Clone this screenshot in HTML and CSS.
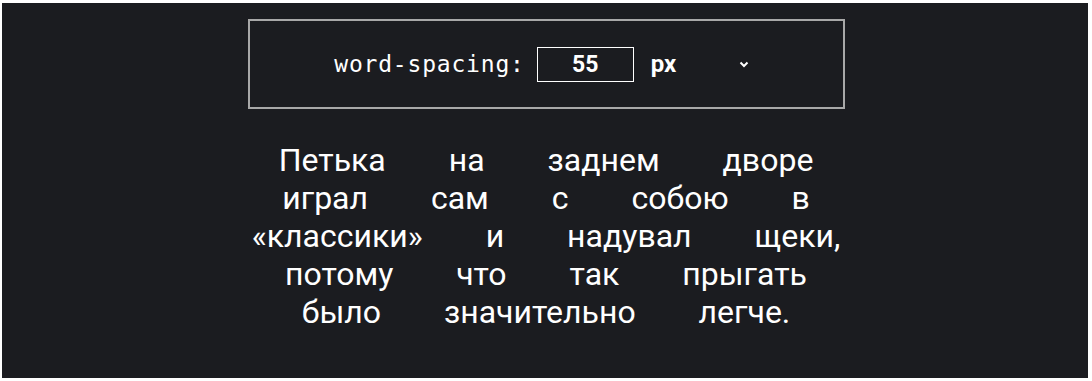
FILE: index.html
```html
<!DOCTYPE html>
<html lang="ru">
  <head>
    <meta charset="UTF-8">
    <title>word-spacing</title>
    <link rel="stylesheet" href="styles.css">
  </head>
  <body>
    <div class="stage">
      <div class="controls">
        <label for="value" class="prop">word-spacing:</label>
        <div class="value" id="value">55</div>
        <div class="unit">
          <span>px</span>
          <svg class="chevron" width="10" height="7" viewBox="0 0 10 7">
            <path d="M1.5 1.5 L5 5 L8.5 1.5" fill="none" stroke="#fff" stroke-width="2"/>
          </svg>
        </div>
      </div>
      <p class="sample">Петька на заднем дворе играл сам с собою в «классики» и надувал щеки, потому что так прыгать было значительно легче.</p>
    </div>
  </body>
</html>
```

FILE: styles.css
```css
html {
    background: #fff;
}
body {
    margin: 0;
    padding: 3px 4px 3px 2px;
}
.stage {
    background-color: #1b1c20;
    height: 375px;
    display: flex;
    flex-direction: column;
    align-items: center;
    padding: 16px 0 0 2px;
    box-sizing: border-box;
    color: #fff;
}
.controls {
    width: 597px;
    height: 90px;
    box-sizing: border-box;
    border: 2px solid #a8a8a8;
    display: flex;
    align-items: center;
    justify-content: center;
    padding-right: 4px;
}
.prop {
    font-family: "DejaVu Sans Mono", monospace;
    font-size: 23px;
    letter-spacing: 0.8px;
    margin-right: 12px;
}
.value {
    width: 97px;
    height: 35px;
    box-sizing: border-box;
    border: 1px solid #fff;
    font-family: Roboto, sans-serif;
    font-weight: 700;
    font-size: 23px;
    display: flex;
    align-items: center;
    justify-content: center;
}
.unit {
    width: 120px;
    display: flex;
    align-items: center;
    justify-content: space-between;
    padding: 0 5px 0 17px;
    box-sizing: border-box;
    font-family: Roboto, sans-serif;
    font-weight: 700;
    font-size: 24px;
}
.chevron {
    display: block;
}
.sample {
    width: 597px;
    margin: 32px 0 0;
    text-align: center;
    font-family: Roboto, sans-serif;
    font-size: 32px;
    line-height: 38px;
    word-spacing: 55px;
}
```
